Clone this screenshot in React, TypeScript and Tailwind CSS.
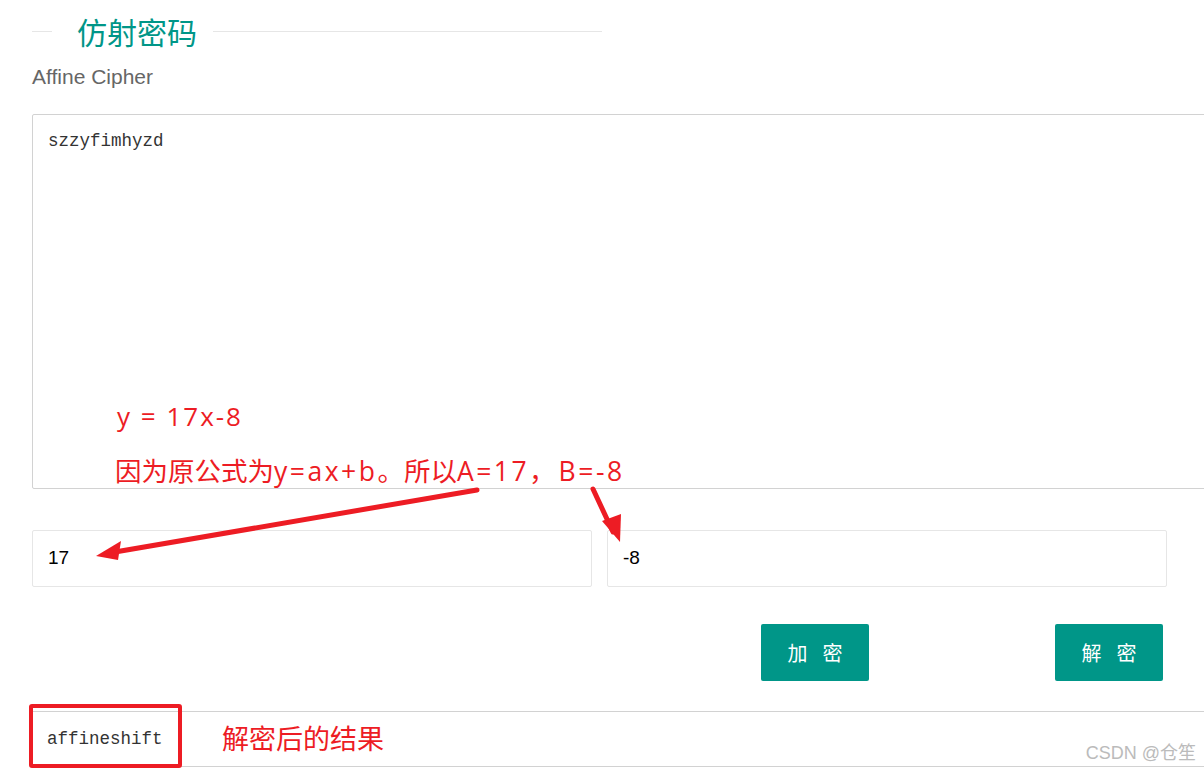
import React from 'react';

const red = '#ed1c24';
const noteFont = { fontFamily: '"Open Sans", "Noto Sans CJK SC", sans-serif' };
const cjk = { fontFamily: '"Noto Sans CJK SC", sans-serif' };

function Arrows() {
    return (
        <svg className="absolute left-0 top-0 pointer-events-none" width="1204" height="775">
            <line x1="477" y1="490" x2="115" y2="552" stroke={red} strokeWidth="5" strokeLinecap="round" />
            <polygon points="96,556 121,541 118,560" fill={red} />
            <line x1="593" y1="489" x2="613" y2="532" stroke={red} strokeWidth="5" strokeLinecap="round" />
            <polygon points="620,542 602,521 621,514" fill={red} />
        </svg>
    );
}

export default function App() {
    return (
        <div className="relative w-[1204px] h-[775px] overflow-hidden bg-white" style={{ fontFamily: '"Liberation Sans", Arial, "Noto Sans CJK SC", sans-serif' }}>
            <div className="pl-[32px]">
                {/* legend */}
                <div className="flex items-center w-[570px] pt-[13px]">
                    <div className="w-[20px] h-px bg-[#e6e6e6]"></div>
                    <span className="pl-[25px] pr-[16px] text-[30px] leading-[36px] text-[#009688]" style={cjk}>仿射密码</span>
                    <div className="flex-1 h-px bg-[#e6e6e6]"></div>
                </div>
                <div className="mt-[16px] text-[21px] leading-[24px] text-[#666]">Affine Cipher</div>

                <div className="mt-[25px] w-[1200px] h-[375px] border border-[#d2d2d2] rounded-[2px] px-[15px] py-[13px] font-['Liberation_Mono',monospace] text-[17.5px] text-[#333]">
                    szzyfimhyzd
                </div>

                <div className="mt-[41px] flex gap-[15px]">
                    <div className="w-[560px] h-[57px] border border-[#e6e6e6] rounded-[2px] px-[15px] flex items-center text-[19px] text-black">17</div>
                    <div className="w-[560px] h-[57px] border border-[#e6e6e6] rounded-[2px] px-[15px] flex items-center text-[19px] text-black">-8</div>
                </div>

                <div className="mt-[37px] flex">
                    <button className="ml-[729px] w-[108px] h-[57px] rounded-[2px] bg-[#009688] text-white text-[20px] tracking-[15px] pl-[15px]" style={cjk}>加密</button>
                    <button className="ml-[186px] w-[108px] h-[57px] rounded-[2px] bg-[#009688] text-white text-[20px] tracking-[15px] pl-[15px]" style={cjk}>解密</button>
                </div>

                <div className="relative mt-[30px] w-[1200px] h-[56px] border-y border-[#d2d2d2] px-[15px] flex items-center font-['Liberation_Mono',monospace] text-[17.5px] text-[#333]">
                    affineshift
                    <div className="absolute left-[-3px] top-[-8px] w-[153px] h-[64px] border-[4px] border-[#ed1c24] rounded-[3px]"></div>
                    <span className="absolute left-[190px] top-[8px] text-[27px] leading-[36px] text-[#ed1c24]" style={cjk}>解密后的结果</span>
                </div>
            </div>

            {/* annotations */}
            <div className="absolute left-[117px] top-[398px] text-[26px] leading-[36px] tracking-[2px] text-[#ed1c24] whitespace-pre" style={noteFont}>y = 17x-8</div>
            <div className="absolute left-[115px] top-[453px] text-[26.5px] leading-[36px] text-[#ed1c24] whitespace-nowrap" style={noteFont}>
                因为原公式为<span className="tracking-[2.5px]">y=ax+b</span>。所以<span className="tracking-[2.5px]">A=17</span>，<span className="tracking-[2.5px] pl-[3px]">B=-8</span>
            </div>
            <Arrows />

            <div className="absolute right-[8px] top-[740px] text-[18px] text-[#bbb]" style={{ fontFamily: '"Liberation Sans", "Noto Sans CJK SC", sans-serif' }}>CSDN @仓笙</div>
        </div>
    );
}
